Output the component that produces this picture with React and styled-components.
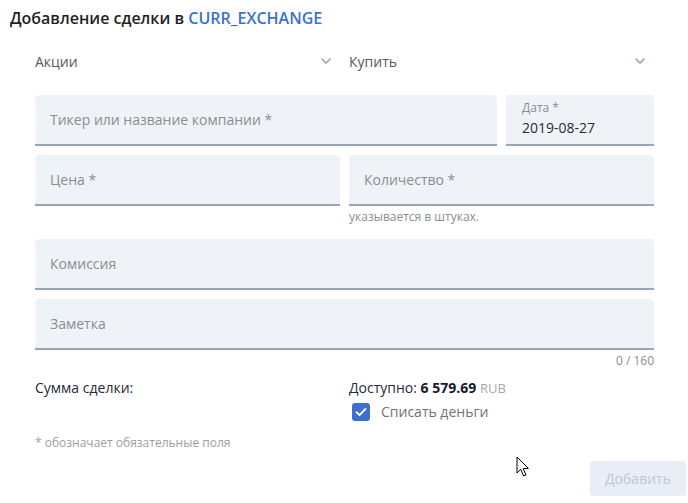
import React from 'react';
import styled, { createGlobalStyle } from 'styled-components';

const App = () => {
  return (
    <>
      <GlobalStyle />
      <Page>
        <Title>
          Добавление сделки в <Portfolio>CURR_EXCHANGE</Portfolio>
        </Title>
        <Form>
          <Row>
            <Select>
              <span>Акции</span>
              <Chevron />
            </Select>
            <Select>
              <span>Купить</span>
              <Chevron />
            </Select>
          </Row>

          <TickerRow>
            <Field>
              <Placeholder>Тикер или название компании *</Placeholder>
            </Field>
            <Field $filled>
              <SmallLabel>Дата *</SmallLabel>
              <Value>2019-08-27</Value>
            </Field>
          </TickerRow>

          <Row>
            <div>
              <Field>
                <Placeholder>Цена *</Placeholder>
              </Field>
            </div>
            <div>
              <Field>
                <Placeholder>Количество *</Placeholder>
              </Field>
              <Hint>указывается в штуках.</Hint>
            </div>
          </Row>

          <FullField>
            <Placeholder>Комиссия</Placeholder>
          </FullField>
          <FullField>
            <Placeholder>Заметка</Placeholder>
          </FullField>
          <Counter>0 / 160</Counter>

          <Row>
            <SumLabel>Сумма сделки:</SumLabel>
            <div>
              <SumLabel>
                Доступно: <Amount>6 579.69</Amount> <Currency>RUB</Currency>
              </SumLabel>
              <CheckRow>
                <CheckBox>
                  <svg width="12" height="10" viewBox="0 0 12 10">
                    <path d="M1.5 5.2 L4.5 8.2 L10.5 1.8" fill="none" stroke="#fff" strokeWidth="1.8" strokeLinecap="round" strokeLinejoin="round" />
                  </svg>
                </CheckBox>
                <CheckLabel>Списать деньги</CheckLabel>
              </CheckRow>
            </div>
          </Row>

          <Required>* обозначает обязательные поля</Required>
        </Form>
        <Footer>
          <AddButton disabled>Добавить</AddButton>
        </Footer>
        <Cursor width="14" height="22" viewBox="0 0 14 22">
          <path d="M1 1 L1 17 L4.8 13.4 L7.6 20 L10 19 L7.2 12.6 L12.4 12.4 Z" fill="#fff" stroke="#000" strokeWidth="1" strokeLinejoin="round" />
        </Cursor>
      </Page>
    </>
  );
};

const Chevron = () => (
  <svg width="12" height="8" viewBox="0 0 12 8">
    <path d="M1.5 1.5 L6 6 L10.5 1.5" fill="none" stroke="#97a5c0" strokeWidth="1.6" />
  </svg>
);

const GlobalStyle = createGlobalStyle`
  html, body {
    margin: 0;
    padding: 0;
    background: #ffffff;
    font-family: 'Open Sans', 'Liberation Sans', sans-serif;
  }
`;

const Page = styled.div`
  position: relative;
  width: 688px;
  height: 503px;
  padding: 8px 0 0 10px;
  box-sizing: border-box;
  overflow: hidden;
`;

const Title = styled.h2`
  margin: 0;
  font-size: 16px;
  font-weight: 600;
  color: #1f1f24;
  line-height: 20px;
`;

const Portfolio = styled.span`
  color: #3b70d4;
`;

const Form = styled.div`
  width: 619px;
  margin: 16px 0 0 25px;
`;

const Row = styled.div`
  display: grid;
  grid-template-columns: 1fr 1fr;
  column-gap: 9px;
`;

const TickerRow = styled.div`
  display: grid;
  grid-template-columns: 462px 148px;
  column-gap: 9px;
  margin-bottom: 9px;
`;

const Select = styled.div`
  display: flex;
  align-items: center;
  justify-content: space-between;
  height: 34px;
  padding-right: 8px;
  margin-bottom: 17px;
  font-size: 14px;
  color: #555a62;
`;

const Field = styled.div`
  height: 51px;
  box-sizing: border-box;
  background: #eff2f7;
  border-radius: 4px 4px 0 0;
  border-bottom: 2px solid #97a5bd;
  display: flex;
  flex-direction: column;
  justify-content: ${(p) => (p.$filled ? 'flex-start' : 'center')};
  padding: ${(p) => (p.$filled ? '5px 15px 0 16px' : '0 15px')};
`;

const FullField = styled(Field)`
  margin-bottom: 9px;
`;

const Placeholder = styled.span`
  font-size: 14px;
  color: #8a8d92;
`;

const SmallLabel = styled.span`
  font-size: 12px;
  color: #8a8d92;
  line-height: 15px;
`;

const Value = styled.span`
  font-size: 14px;
  color: #2a2c31;
  line-height: 20px;
  margin-top: 3px;
`;

const Hint = styled.div`
  font-size: 12px;
  color: #8a8d92;
  margin-top: 2px;
  height: 31px;
`;

const Counter = styled.div`
  text-align: right;
  font-size: 12px;
  color: #8a8d92;
  margin-top: -7px;
  height: 27px;
`;

const SumLabel = styled.div`
  font-size: 14px;
  color: #26293a;
  line-height: 18px;
`;

const Amount = styled.b`
  font-weight: 700;
  color: #161a2e;
`;

const Currency = styled.span`
  color: #a3a8b3;
  font-size: 13px;
`;

const CheckRow = styled.div`
  display: flex;
  align-items: center;
  margin-top: 5px;
  padding-left: 3px;
`;

const CheckBox = styled.span`
  width: 18px;
  height: 18px;
  border-radius: 3px;
  background: #3d6fcf;
  display: inline-flex;
  align-items: center;
  justify-content: center;
  margin-right: 11px;
`;

const CheckLabel = styled.span`
  font-size: 14px;
  color: #6f737a;
`;

const Required = styled.div`
  font-size: 12px;
  color: #9a9da3;
  margin-top: 13px;
`;

const Footer = styled.div`
  display: flex;
  justify-content: flex-end;
  margin-top: 10px;
  padding-right: 2px;
`;

const AddButton = styled.button`
  width: 96px;
  height: 35px;
  border: none;
  border-radius: 4px;
  background: #e8edf6;
  color: #bfc7d6;
  font-family: inherit;
  font-size: 14px;
`;

const Cursor = styled.svg`
  position: absolute;
  left: 516px;
  top: 456px;
`;

export default App;
